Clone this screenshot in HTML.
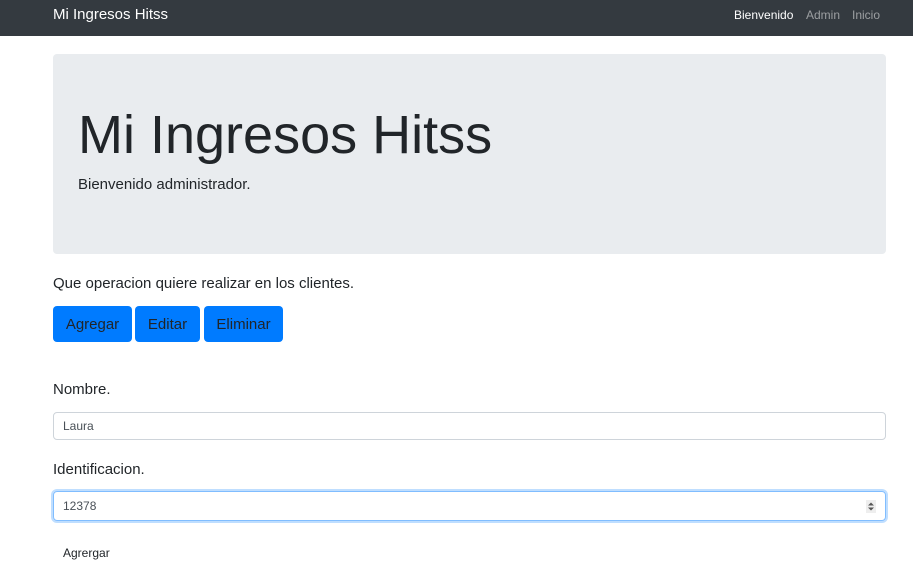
<!DOCTYPE html>
<html><head><meta charset="utf-8"><style>
*{box-sizing:border-box;margin:0;padding:0}
body{width:913px;height:567px;overflow:hidden;background:#fff;font-family:"Liberation Sans",sans-serif;color:#212529;position:relative}
.a{position:absolute;white-space:nowrap}
.nav{position:absolute;left:0;top:0;width:913px;height:36px;background:#343a40}
.jumbo{position:absolute;left:53px;top:54px;width:833px;height:200px;background:#e9ecef;border-radius:4px}
.btn{position:absolute;top:306px;height:36px;background:#007bff;border-radius:4px;color:#212529;font-size:15px;line-height:37px;text-align:center}
.inp{position:absolute;left:53px;width:833px;border:1px solid #ced4da;border-radius:4px;font-size:12px;color:#495057;padding-left:9px}
</style></head><body>
<div class="nav"></div>
<div class="a" style="left:53px;top:6px;font-size:15px;color:#fff">Mi Ingresos Hitss</div>
<div class="a" style="left:734px;top:8px;font-size:12px;color:#fff">Bienvenido</div>
<div class="a" style="left:806px;top:8px;font-size:12px;color:rgba(255,255,255,.5)">Admin</div>
<div class="a" style="left:852px;top:8px;font-size:12px;color:rgba(255,255,255,.5)">Inicio</div>
<div class="jumbo"></div>
<div class="a" style="left:78px;top:103px;font-size:54px;line-height:64px">Mi Ingresos Hitss</div>
<div class="a" style="left:78px;top:176px;font-size:15px">Bienvenido administrador.</div>
<div class="a" style="left:53px;top:275px;font-size:15px">Que operacion quiere realizar en los clientes.</div>
<div class="btn" style="left:53px;width:79px">Agregar</div>
<div class="btn" style="left:135px;width:65px">Editar</div>
<div class="btn" style="left:204px;width:79px">Eliminar</div>
<div class="a" style="left:53px;top:381px;font-size:15px">Nombre.</div>
<div class="inp" style="top:412px;height:28px;line-height:26px">Laura</div>
<div class="a" style="left:53px;top:461px;font-size:15px">Identificacion.</div>
<div class="inp" style="top:491px;height:30px;line-height:28px;border-color:#80bdff;box-shadow:0 0 0 2px rgba(0,123,255,.25)">12378
<svg style="position:absolute;right:9px;top:8px" width="10" height="13" viewBox="0 0 10 13"><rect width="10" height="13" fill="#eee"/><path d="M2 5.5L5 2.5L8 5.5Z M2 7.5L5 10.5L8 7.5Z" fill="#555"/></svg></div>
<div class="a" style="left:63px;top:546px;font-size:12px">Agrergar</div>
</body></html>
